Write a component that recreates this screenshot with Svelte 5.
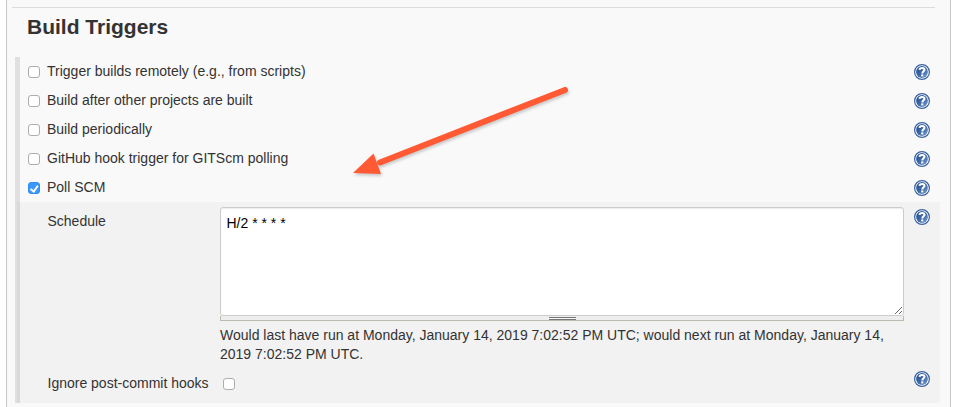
<script>
  let triggers = $state([
    { label: 'Trigger builds remotely (e.g., from scripts)', on: false },
    { label: 'Build after other projects are built', on: false },
    { label: 'Build periodically', on: false },
    { label: 'GitHub hook trigger for GITScm polling', on: false },
    { label: 'Poll SCM', on: true }
  ]);
  let ignoreHooks = $state(false);
  let schedule = $state('H/2 * * * *');
</script>

{#snippet help()}
  <button class="help" aria-label="Help">
    <svg width="16" height="16" viewBox="0 0 16 16">
      <defs>
        <linearGradient id="disc" x1="0" y1="0" x2="1" y2="1">
          <stop offset="0" stop-color="#204a87" />
          <stop offset="0.5" stop-color="#3d68a6" />
          <stop offset="1" stop-color="#7da0d0" />
        </linearGradient>
      </defs>
      <circle cx="8" cy="8" r="7.4" fill="#fff" stroke="#3a62a0" stroke-width="1.2" />
      <circle cx="8" cy="8" r="5.9" fill="url(#disc)" />
      <path d="M5.5 5.9C5.7 4.3 6.7 3.9 8 3.9c1.5 0 2.5.7 2.5 1.9C10.5 7.4 8.3 7.3 8.3 9.4" fill="none" stroke="#fff" stroke-width="2" />
      <rect x="7.2" y="10.4" width="2.1" height="2" fill="#fff" />
    </svg>
  </button>
{/snippet}

<main>
  <section class="panel">
    <div class="rule"></div>
    <h1>Build Triggers</h1>
    <div class="group">
      {#each triggers as t}
        <div class="row">
          <label><input type="checkbox" bind:checked={t.on} /><span>{t.label}</span></label>
          {@render help()}
        </div>
      {/each}
      <div class="nested">
        <div class="field">
          <span class="name">Schedule</span>
          <div class="control">
            <textarea aria-label="Schedule" spellcheck="false" bind:value={schedule}></textarea>
            <div class="handle"><i></i></div>
            <p>Would last have run at Monday, January 14, 2019 7:02:52 PM UTC; would next run at Monday, January 14,<br />2019 7:02:52 PM UTC.</p>
          </div>
          {@render help()}
        </div>
        <div class="field ignore">
          <span class="name">Ignore post-commit hooks</span>
          <div class="control"><input type="checkbox" aria-label="Ignore post-commit hooks" bind:checked={ignoreHooks} /></div>
          {@render help()}
        </div>
      </div>
    </div>
  </section>
  <svg class="arrow" width="230" height="100" viewBox="0 0 230 100">
    <path d="M215 10 L30 82.5" stroke="#ff5a34" stroke-width="6" stroke-linecap="round" />
    <path d="M3 93 L23.5 73.5 L31 94 Z" fill="#ff5a34" />
  </svg>
</main>

<style>
  :global(body) { background: #fff; }
  main {
    position: relative;
    width: 960px;
    height: 407px;
    overflow: hidden;
    box-sizing: border-box;
    padding: 0 9px 0 6px;
    font: 14px/19px "Liberation Sans", Arial, sans-serif;
    color: #333;
  }
  .panel {
    box-sizing: border-box;
    height: 407px;
    padding: 7px 10px 0 8px;
    border: solid #c6c6c6;
    border-width: 0 1px;
    background: #f9f9f9;
  }
  .rule { height: 1px; margin: 0 5px 0 -3px; background: #dcdcdc; }
  h1 { margin: 6px 0 0 12px; height: 43px; font-size: 21px; line-height: 26px; font-weight: 700; }
  .group { height: 346px; box-sizing: border-box; border-left: 5px solid #e0e0e0; }
  .row { display: flex; justify-content: space-between; height: 29px; padding: 0 10px 0 8px; align-items: center; }
  label { display: flex; align-items: center; }
  label span { margin-left: 7px; }
  input {
    appearance: none;
    position: relative;
    display: block;
    box-sizing: border-box;
    width: 12px;
    height: 12px;
    margin: 1px 0 0;
    border: 1px solid #adadad;
    border-radius: 3px;
    background: #fff;
  }
  input:checked { border-color: #318bf2; background: #3b99fc; }
  input:checked::after {
    content: '';
    position: absolute;
    left: 3px;
    top: 0.5px;
    box-sizing: border-box;
    width: 4.5px;
    height: 7.5px;
    border: solid #fff;
    border-width: 0 2px 2px 0;
    transform: rotate(36deg);
  }
  .help { display: block; flex: none; width: 16px; height: 16px; margin: 0; padding: 0; border: 0; background: none; }
  .help svg { display: block; }
  .nested {
    height: 201px;
    box-sizing: border-box;
    margin-left: -3px;
    padding: 5px 10px 0 31px;
    border-left: 3px solid #d9d9d9;
    background: #f2f2f2;
  }
  .field { display: flex; }
  .name { flex: none; width: 169.5px; margin-left: -3.5px; padding-top: 5px; }
  .field .help { margin: 2px 0 0 auto; }
  .control { width: 684px; margin-left: 3px; }
  textarea {
    display: block;
    box-sizing: border-box;
    width: 684px;
    height: 109px;
    margin: 0;
    padding: 6px 6px 6px 5.5px;
    border: 1px solid #ccc;
    border-radius: 3px;
    background: #fff;
    box-shadow: inset 0 1px 1px #eee;
    color: #000;
    font: 14px/19px "Liberation Sans", Arial, sans-serif;
    outline: 0;
  }
  .handle {
    display: flex;
    justify-content: center;
    box-sizing: border-box;
    height: 5px;
    border: solid #babcae;
    border-width: 0 1px 1px;
    background: #eee;
  }
  .handle i { width: 27px; height: 3px; margin-top: 1px; box-sizing: border-box; border: solid #777; border-width: 1px 0; background: #f4f4f4; }
  p { margin: 5px 0 0; height: 38px; white-space: nowrap; }
  .ignore { padding-top: 5px; }
  .ignore .control { padding: 8px 0 0 3px; box-sizing: border-box; }
  .arrow { position: absolute; left: 350px; top: 80px; filter: drop-shadow(1px 2px 1.5px rgba(0, 0, 0, .2)); pointer-events: none; }
</style>
